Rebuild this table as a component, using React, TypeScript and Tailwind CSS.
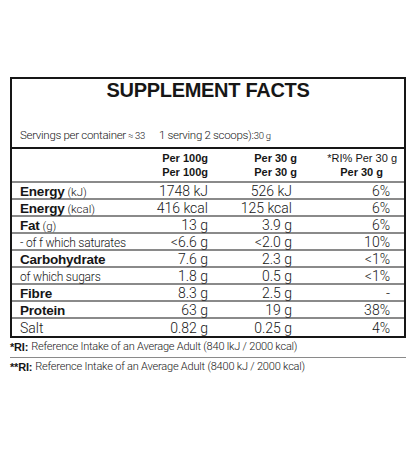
const rows: { bold: string; light?: string; boldRow: boolean; a: string; b: string; c: string }[] = [
  { bold: 'Energy', light: ' (kJ)', boldRow: true, a: '1748 kJ', b: '526 kJ', c: '6%' },
  { bold: 'Energy', light: ' (kcal)', boldRow: true, a: '416 kcal', b: '125 kcal', c: '6%' },
  { bold: 'Fat', light: ' (g)', boldRow: true, a: '13 g', b: '3.9 g', c: '6%' },
  { bold: '', light: '- of f which saturates', boldRow: false, a: '<6.6 g', b: '<2.0 g', c: '10%' },
  { bold: 'Carbohydrate', boldRow: true, a: '7.6 g', b: '2.3 g', c: '<1%' },
  { bold: '', light: 'of which sugars', boldRow: false, a: '1.8 g', b: '0.5 g', c: '<1%' },
  { bold: 'Fibre', boldRow: true, a: '8.3 g', b: '2.5 g', c: '-' },
  { bold: 'Protein', boldRow: true, a: '63 g', b: '19 g', c: '38%' },
  { bold: '', light: 'Salt', boldRow: false, a: '0.82 g', b: '0.25 g', c: '4%' },
];

export default function App() {
  return (
    <div className="w-[416px] h-[473px] bg-white text-[#161616] font-['Liberation_Sans',Arial,sans-serif] pt-[77px] px-[10px]">
      {/* Facts box */}
      <div className="border-2 border-[#161616]">
        <div className="h-[68px] flex flex-col">
          <h1 className="text-center font-bold text-[20px] leading-none tracking-[-0.3px] mt-[1px]">
            SUPPLEMENT FACTS
          </h1>
          <div className="mt-auto mb-[3px] pl-[8px] text-[11.5px] tracking-[-0.3px] font-['Roboto',sans-serif] font-light">
            Servings per container<span className="text-[9.5px]"> ≈ 33</span>
            <span className="ml-[14px]">1 serving 2 scoops):</span>
            <span className="text-[9.5px]">30 g</span>
          </div>
        </div>
        <div className="border-t-2 border-[#161616]">
          {/* header */}
          <div className="grid grid-cols-[110px_88px_84px_114px] h-[34px] items-center border-b-2 border-[#8a8a8a] text-[11px] font-bold leading-[14px]">
            <div />
            <div className="text-right pr-[2px]">
              <div>Per 100g</div>
              <div>Per 100g</div>
            </div>
            <div className="text-right -mr-[3px]">
              <div>Per 30 g</div>
              <div>Per 30 g</div>
            </div>
            <div className="text-right pr-[11px]">
              <div className="font-normal">*RI% Per 30 g</div>
              <div className="pr-[14px]">Per 30 g</div>
            </div>
          </div>
          {rows.map((r, i) => (
            <div
              key={i}
              className={`grid grid-cols-[110px_88px_84px_114px] h-[17px] items-center ${i < rows.length - 1 ? 'border-b-2 border-[#8a8a8a]' : ''}`}
            >
              <div className="pl-[8px] whitespace-nowrap leading-none">
                {r.bold && <span className="font-bold text-[13.5px] tracking-[-0.2px]">{r.bold}</span>}
                {r.light && (
                  <span
                    className={`font-['Roboto',sans-serif] font-light ${r.boldRow ? 'text-[11.5px]' : r.light === 'Salt' ? 'text-[14px]' : 'text-[12px] tracking-[-0.2px]'}`}
                  >
                    {r.light}
                  </span>
                )}
              </div>
              <div className="text-right pr-[2px] font-['Roboto',sans-serif] font-light text-[14px] leading-none">{r.a}</div>
              <div className="text-right pr-[2px] font-['Roboto',sans-serif] font-light text-[14px] leading-none">{r.b}</div>
              <div className="text-right pr-[18px] font-['Roboto',sans-serif] font-light text-[14px] leading-none">{r.c}</div>
            </div>
          ))}
        </div>
      </div>

      {/* Footnotes */}
      <div className="text-[11px] font-['Roboto',sans-serif] font-light tracking-[-0.2px]">
        <div className="h-[20px] flex items-center border-b border-[#8a8a8a]">
          <span className="font-['Liberation_Sans',sans-serif] font-bold">*RI:</span>
          <span className="ml-[3px]">Reference Intake of an Average Adult (840 lkJ / 2000 kcal)</span>
        </div>
        <div className="h-[18px] flex items-center">
          <span className="font-['Liberation_Sans',sans-serif] font-bold">**RI:</span>
          <span className="ml-[3px]">Reference Intake of an Average Adult (8400 kJ / 2000 kcal)</span>
        </div>
      </div>
    </div>
  );
}
